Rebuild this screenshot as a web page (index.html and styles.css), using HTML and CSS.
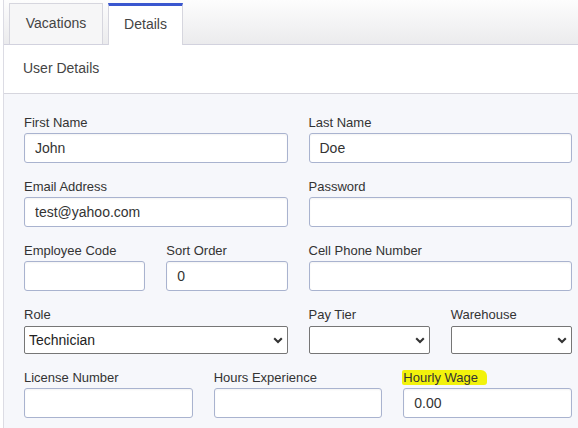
FILE: index.html
```html
<!DOCTYPE html>
<html lang="en">
<head>
<meta charset="utf-8">
<title>User Details</title>
<link rel="stylesheet" href="styles.css">
</head>
<body>
<div class="panel">
  <div class="tabs">
    <div class="tab tab-vacations">Vacations</div>
    <div class="tab tab-details active">Details</div>
  </div>
  <div class="header">User Details</div>
  <div class="body">
    <div class="row cols-2">
      <div class="field">
        <label class="lbl">First Name</label>
        <input class="inp" type="text" value="John">
      </div>
      <div class="field">
        <label class="lbl">Last Name</label>
        <input class="inp" type="text" value="Doe">
      </div>
    </div>
    <div class="row cols-2">
      <div class="field">
        <label class="lbl">Email Address</label>
        <input class="inp" type="text" value="test@yahoo.com">
      </div>
      <div class="field">
        <label class="lbl">Password</label>
        <input class="inp" type="password" value="">
      </div>
    </div>
    <div class="row cols-4">
      <div class="field">
        <label class="lbl">Employee Code</label>
        <input class="inp" type="text" value="">
      </div>
      <div class="field">
        <label class="lbl">Sort Order</label>
        <input class="inp" type="text" value="0">
      </div>
      <div class="field span-2">
        <label class="lbl">Cell Phone Number</label>
        <input class="inp" type="text" value="">
      </div>
    </div>
    <div class="row cols-4 row-selects">
      <div class="field span-2">
        <label class="lbl">Role</label>
        <div class="sel-wrap">
          <select class="sel"><option>Technician</option></select>
          <svg class="chev" width="10" height="7" viewBox="0 0 10 7"><path d="M1.2 1.3 L5 5 L8.8 1.3" fill="none" stroke="#333" stroke-width="2.1"/></svg>
        </div>
      </div>
      <div class="field">
        <label class="lbl">Pay Tier</label>
        <div class="sel-wrap">
          <select class="sel"><option></option></select>
          <svg class="chev" width="10" height="7" viewBox="0 0 10 7"><path d="M1.2 1.3 L5 5 L8.8 1.3" fill="none" stroke="#333" stroke-width="2.1"/></svg>
        </div>
      </div>
      <div class="field">
        <label class="lbl">Warehouse</label>
        <div class="sel-wrap">
          <select class="sel"><option></option></select>
          <svg class="chev" width="10" height="7" viewBox="0 0 10 7"><path d="M1.2 1.3 L5 5 L8.8 1.3" fill="none" stroke="#333" stroke-width="2.1"/></svg>
        </div>
      </div>
    </div>
    <div class="row cols-3">
      <div class="field">
        <label class="lbl">License Number</label>
        <input class="inp" type="text" value="">
      </div>
      <div class="field">
        <label class="lbl">Hours Experience</label>
        <input class="inp" type="text" value="">
      </div>
      <div class="field">
        <label class="lbl"><span class="hl">Hourly Wage</span></label>
        <input class="inp" type="text" value="0.00">
      </div>
    </div>
  </div>
</div>
</body>
</html>
```

FILE: styles.css
```css
* { box-sizing: border-box; }
html, body {
  margin: 0;
  padding: 0;
  background: #ffffff;
  font-family: "Liberation Sans", Arial, sans-serif;
  color: #333;
}
.panel {
  margin-left: 3px;
  border-left: 1px solid #dcdce4;
  height: 428px;
  overflow: hidden;
  background: #f6f7fb;
}
.tabs {
  height: 45px;
  display: flex;
  align-items: flex-end;
  gap: 5px;
  padding: 3px 0 0 5px;
  background: linear-gradient(#fdfdfd, #ebebed);
  border-bottom: 1px solid #d2d2de;
}
.tab {
  height: 41px;
  display: flex;
  align-items: center;
  justify-content: center;
  font-size: 14px;
  color: #444;
  border: 1px solid #d6d6de;
  border-bottom: none;
  padding-bottom: 2px;
}
.tab-vacations {
  width: 94px;
  background: #f6f6f7;
}
.tab-details {
  width: 75px;
  height: 42px;
  margin-bottom: -1px;
  background: #ffffff;
  border-top: 3px solid #3a57cf;
  padding-bottom: 4px;
}
.header {
  height: 49px;
  background: #ffffff;
  border-bottom: 1px solid #d6d6de;
  padding-left: 19px;
  line-height: 47px;
  font-size: 14px;
  color: #444;
}
.body {
  padding: 21px 6px 0 20px;
}
.row {
  display: grid;
  column-gap: 21px;
  margin-bottom: 16px;
}
.cols-2 { grid-template-columns: repeat(2, 1fr); }
.cols-3 { grid-template-columns: repeat(3, 1fr); }
.cols-4 { grid-template-columns: repeat(4, 1fr); }
.span-2 { grid-column: span 2; }
.field {
  display: flex;
  flex-direction: column;
  min-width: 0;
}
.lbl {
  display: block;
  font-size: 13px;
  line-height: 16px;
  margin-bottom: 2px;
  color: #333;
}
.inp {
  height: 30px;
  width: 100%;
  border: 1px solid #a9b3cf;
  border-radius: 3px;
  background: #fff;
  box-shadow: inset 0 1px 2px rgba(0, 0, 0, 0.05);
  padding: 0 10px;
  font-family: "Liberation Sans", Arial, sans-serif;
  font-size: 14px;
  color: #333;
  outline: none;
}
.row-selects .lbl { margin-bottom: 3px; }
.sel-wrap {
  position: relative;
  height: 28px;
}
.sel {
  appearance: none;
  -webkit-appearance: none;
  width: 100%;
  height: 28px;
  border: 1px solid #767676;
  border-radius: 2px;
  background: #fff;
  padding: 0 24px 0 4px;
  font-family: "Liberation Sans", Arial, sans-serif;
  font-size: 14px;
  color: #222;
  outline: none;
}
.chev {
  position: absolute;
  right: 5px;
  top: 11px;
  pointer-events: none;
}
.hl {
  background: #f2f20c;
  padding: 0 9px 0 1px;
  margin-left: -1px;
  border-radius: 2px 6px 3px 2px;
}
```
